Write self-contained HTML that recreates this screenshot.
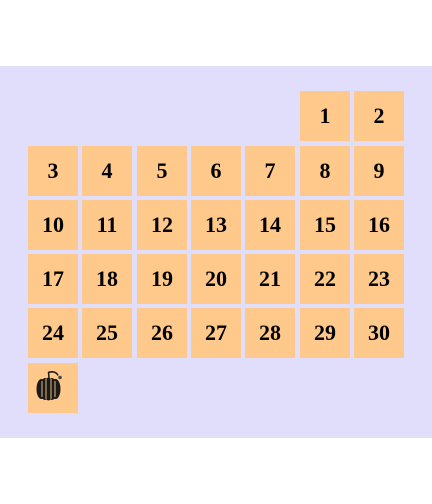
<!DOCTYPE html>
<html><head><style>
html,body{margin:0;padding:0;width:432px;height:504px;background:#fff;overflow:hidden}
.bg{position:absolute;left:0;top:66px;width:432px;height:372px;background:#e0defa}
.c{position:absolute;width:50px;height:50px;background:#fec98b;font:bold 22px "Liberation Serif",serif;color:#000;display:flex;align-items:center;justify-content:center}
</style></head><body>
<div class="bg"></div>
<div class="c" style="left:300px;top:91px">1</div>
<div class="c" style="left:354px;top:91px">2</div>

<div class="c" style="left:28px;top:146px">3</div>
<div class="c" style="left:82px;top:146px">4</div>
<div class="c" style="left:137px;top:146px">5</div>
<div class="c" style="left:191px;top:146px">6</div>
<div class="c" style="left:245px;top:146px">7</div>
<div class="c" style="left:300px;top:146px">8</div>
<div class="c" style="left:354px;top:146px">9</div>

<div class="c" style="left:28px;top:200px">10</div>
<div class="c" style="left:82px;top:200px">11</div>
<div class="c" style="left:137px;top:200px">12</div>
<div class="c" style="left:191px;top:200px">13</div>
<div class="c" style="left:245px;top:200px">14</div>
<div class="c" style="left:300px;top:200px">15</div>
<div class="c" style="left:354px;top:200px">16</div>

<div class="c" style="left:28px;top:254px">17</div>
<div class="c" style="left:82px;top:254px">18</div>
<div class="c" style="left:137px;top:254px">19</div>
<div class="c" style="left:191px;top:254px">20</div>
<div class="c" style="left:245px;top:254px">21</div>
<div class="c" style="left:300px;top:254px">22</div>
<div class="c" style="left:354px;top:254px">23</div>

<div class="c" style="left:28px;top:308px">24</div>
<div class="c" style="left:82px;top:308px">25</div>
<div class="c" style="left:137px;top:308px">26</div>
<div class="c" style="left:191px;top:308px">27</div>
<div class="c" style="left:245px;top:308px">28</div>
<div class="c" style="left:300px;top:308px">29</div>
<div class="c" style="left:354px;top:308px">30</div>

<div class="c" style="left:28px;top:363px">
<svg width="50" height="50" viewBox="0 0 50 50">
<ellipse cx="13.5" cy="26" rx="5" ry="10" fill="#1a1a1a"/>
<ellipse cx="27.5" cy="26" rx="5" ry="10" fill="#1a1a1a"/>
<ellipse cx="17" cy="26" rx="5" ry="11" fill="#1a1a1a"/>
<ellipse cx="24" cy="26" rx="5" ry="11" fill="#1a1a1a"/>
<ellipse cx="20.5" cy="26" rx="4.5" ry="11.5" fill="#1a1a1a"/>
<path d="M14 18v16M18 16v20M23 16v20M27 18v16" stroke="#fec98b" stroke-width="0.9"/>
<path d="M21 15 L20.5 9 M20.5 9.5 C24.5 8 28.5 9 30 12.5" stroke="#1a1a1a" stroke-width="1.5" fill="none"/>
<circle cx="32" cy="14.5" r="1.8" fill="#444"/>
</svg>
</div>
</body></html>
